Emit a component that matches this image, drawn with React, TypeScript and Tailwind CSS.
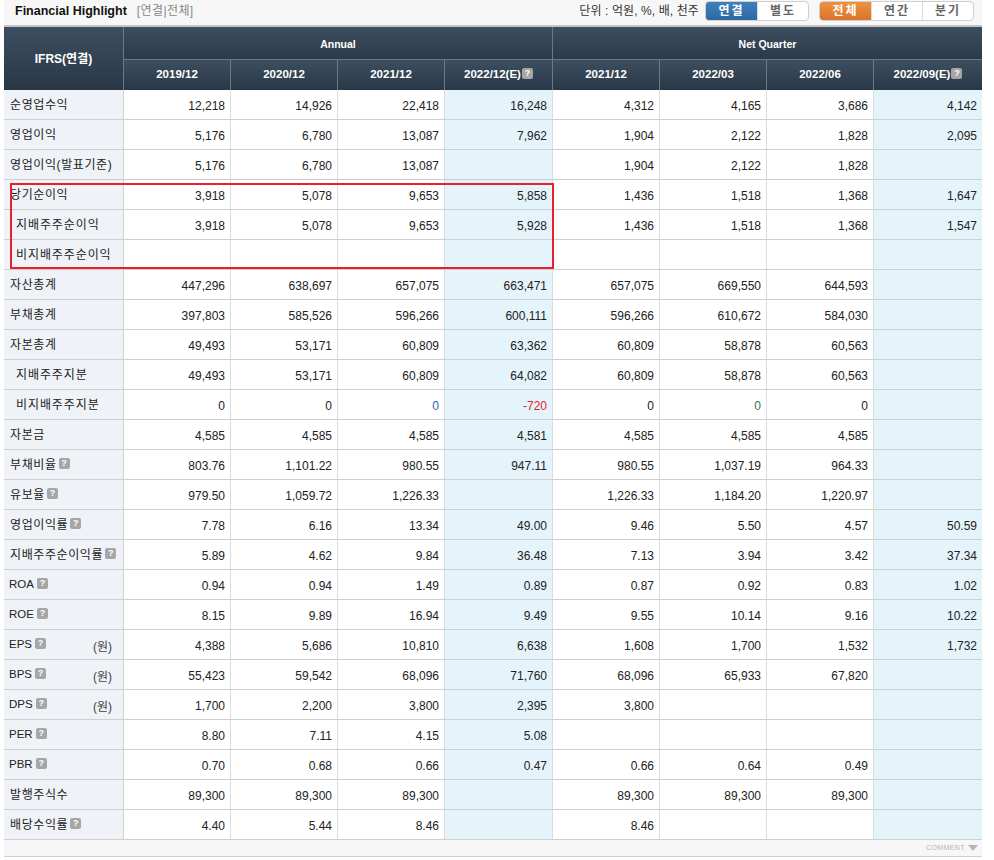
const cols = ['2019/12', '2020/12', '2021/12', '2022/12(E)', '2021/12', '2022/03', '2022/06', '2022/09(E)'];

interface Row {
  label: string;
  indent?: boolean;
  help?: boolean;
  unit?: string;
  values: string[];
}

const rows: Row[] = [
  { label: '순영업수익', values: ['12,218', '14,926', '22,418', '16,248', '4,312', '4,165', '3,686', '4,142'] },
  { label: '영업이익', values: ['5,176', '6,780', '13,087', '7,962', '1,904', '2,122', '1,828', '2,095'] },
  { label: '영업이익(발표기준)', values: ['5,176', '6,780', '13,087', '', '1,904', '2,122', '1,828', ''] },
  { label: '당기순이익', values: ['3,918', '5,078', '9,653', '5,858', '1,436', '1,518', '1,368', '1,647'] },
  { label: '지배주주순이익', indent: true, values: ['3,918', '5,078', '9,653', '5,928', '1,436', '1,518', '1,368', '1,547'] },
  { label: '비지배주주순이익', indent: true, values: ['', '', '', '', '', '', '', ''] },
  { label: '자산총계', values: ['447,296', '638,697', '657,075', '663,471', '657,075', '669,550', '644,593', ''] },
  { label: '부채총계', values: ['397,803', '585,526', '596,266', '600,111', '596,266', '610,672', '584,030', ''] },
  { label: '자본총계', values: ['49,493', '53,171', '60,809', '63,362', '60,809', '58,878', '60,563', ''] },
  { label: '지배주주지분', indent: true, values: ['49,493', '53,171', '60,809', '64,082', '60,809', '58,878', '60,563', ''] },
  { label: '비지배주주지분', indent: true, values: ['0', '0', '0', '-720', '0', '0', '0', ''] },
  { label: '자본금', values: ['4,585', '4,585', '4,585', '4,581', '4,585', '4,585', '4,585', ''] },
  { label: '부채비율', help: true, values: ['803.76', '1,101.22', '980.55', '947.11', '980.55', '1,037.19', '964.33', ''] },
  { label: '유보율', help: true, values: ['979.50', '1,059.72', '1,226.33', '', '1,226.33', '1,184.20', '1,220.97', ''] },
  { label: '영업이익률', help: true, values: ['7.78', '6.16', '13.34', '49.00', '9.46', '5.50', '4.57', '50.59'] },
  { label: '지배주주순이익률', help: true, values: ['5.89', '4.62', '9.84', '36.48', '7.13', '3.94', '3.42', '37.34'] },
  { label: 'ROA', help: true, values: ['0.94', '0.94', '1.49', '0.89', '0.87', '0.92', '0.83', '1.02'] },
  { label: 'ROE', help: true, values: ['8.15', '9.89', '16.94', '9.49', '9.55', '10.14', '9.16', '10.22'] },
  { label: 'EPS', help: true, unit: '(원)', values: ['4,388', '5,686', '10,810', '6,638', '1,608', '1,700', '1,532', '1,732'] },
  { label: 'BPS', help: true, unit: '(원)', values: ['55,423', '59,542', '68,096', '71,760', '68,096', '65,933', '67,820', ''] },
  { label: 'DPS', help: true, unit: '(원)', values: ['1,700', '2,200', '3,800', '2,395', '3,800', '', '', ''] },
  { label: 'PER', help: true, values: ['8.80', '7.11', '4.15', '5.08', '', '', '', ''] },
  { label: 'PBR', help: true, values: ['0.70', '0.68', '0.66', '0.47', '0.66', '0.64', '0.49', ''] },
  { label: '발행주식수', values: ['89,300', '89,300', '89,300', '', '89,300', '89,300', '89,300', ''] },
  { label: '배당수익률', help: true, values: ['4.40', '5.44', '8.46', '', '8.46', '', '', ''] },
];

function Help() {
  return (
    <span className="inline-flex w-[11px] h-[11px] shrink-0 items-center justify-center rounded-[2px] bg-[#a6a6a6] text-white text-[9px] font-bold leading-none">
      ?
    </span>
  );
}

function Toggle({ items, active }: { items: string[]; active: string }) {
  return (
    <div className="flex h-[20px] rounded-[4px] border border-[#cfcfcf] bg-white overflow-hidden">
      {items.map((item, i) => (
        <div
          key={item}
          className={`w-[51px] flex items-center justify-center text-xs font-bold tracking-[2px] ${i > 0 ? 'border-l border-[#dcdcdc]' : ''} ${
            item === '연결' ? 'bg-gradient-to-b from-[#3f80bd] to-[#2e68a3] text-white' : item === active ? 'bg-gradient-to-b from-[#ee9240] to-[#d9742a] text-white' : 'text-[#666]'
          }`}
        >
          {item}
        </div>
      ))}
    </div>
  );
}

export default function App() {
  return (
    <div className="relative w-[994px] h-[860px] bg-white text-xs text-[#222] font-['Liberation_Sans','Noto_Sans_CJK_KR',sans-serif]">
      <div className="ml-[4px] w-[978px]">
        {/* Title bar */}
        <div className="h-[27px] bg-[#f7f7f7] border-b-2 border-[#c4c4c4] flex items-center pl-[11px] pr-[8px] pb-[3px]">
          <span className="font-bold text-[12.5px] text-[#111]">Financial Highlight</span>
          <span className="ml-[10px] text-[#888] tracking-[0.4px]">[연결|전체]</span>
          <span className="ml-auto text-[#333] tracking-[0.1px]">단위 : 억원, %, 배, 천주</span>
          <div className="ml-[6px]">
            <Toggle items={['연결', '별도']} active="연결" />
          </div>
          <div className="ml-[10px]">
            <Toggle items={['전체', '연간', '분기']} active="전체" />
          </div>
        </div>

        {/* Table */}
        <div className="grid grid-cols-[120px_107px_107px_107px_108px_107px_107px_107px_108px] grid-rows-[33px_30px] bg-[#2d3d4e] text-white font-bold">
          <div className="row-span-2 flex items-center justify-center border-r border-[#6c7885] bg-gradient-to-b from-[#3d4e60] to-[#293847]">IFRS(연결)</div>
          <div className="col-span-4 flex items-center justify-center pt-[2px] text-[10.5px] border-r border-[#6c7885] border-b bg-gradient-to-b from-[#3d4e60] to-[#2b3a4a]">Annual</div>
          <div className="col-span-4 flex items-center justify-center pt-[2px] text-[10.5px] border-b border-[#6c7885] bg-gradient-to-b from-[#3d4e60] to-[#2b3a4a]">Net Quarter</div>
          {cols.map((c, i) => (
            <div key={i} className={`flex items-center justify-center gap-px text-[11.5px] bg-gradient-to-b from-[#3d4e60] to-[#293847] ${i < 7 ? 'border-r border-[#6c7885]' : ''}`}>
              {c}
              {c.includes('(E)') && (
                <span className="relative top-[-2px] flex">
                  <Help />
                </span>
              )}
            </div>
          ))}
        </div>

        {rows.map((row) => {
          const latin = /^[A-Z]/.test(row.label);
          return (
            <div key={row.label} className="grid grid-cols-[120px_107px_107px_107px_108px_107px_107px_107px_108px] h-[30px] border-b border-[#cfcfcf]">
              <div className={`flex items-center whitespace-nowrap bg-[#eff2f7] border-r border-[#cfcfcf] pr-[11px] ${row.indent ? 'pl-[12px]' : latin ? 'pl-[5px]' : 'pl-[6px]'}`}>
                <span className={latin ? 'text-[11.5px]' : row.indent ? 'tracking-[0.9px]' : 'tracking-[0.6px]'}>{row.label}</span>
                {row.help && (
                  <span className={`flex relative top-[-1px] ${latin ? 'ml-[3px]' : 'ml-[2px]'}`}>
                    <Help />
                  </span>
                )}
                {row.unit && <span className="ml-auto relative top-[2px] text-[#444]">{row.unit}</span>}
              </div>
              {row.values.map((v, i) => (
                <div
                  key={i}
                  className={`flex items-center justify-end pr-[5px] ${i === 3 || i === 7 ? 'bg-[#e5f4fa]' : ''} ${i < 7 ? 'border-r border-[#dcdcdc]' : ''} ${v === '-720' ? 'text-[#e0252b]' : ''} ${v === '0' && i === 2 ? 'text-[#1f5fa8]' : ''} ${v === '0' && i === 5 ? 'text-[#2b7a4b]' : ''}`}
                >
                  <span className="relative top-[1px]">{v}</span>
                </div>
              ))}
            </div>
          );
        })}

        {/* Footer */}
        <div className="h-[17px] bg-[#f7f7f7] border-b border-[#d0d0d0] flex items-center justify-end pr-[4px] gap-[3px] text-[7px] tracking-[0.4px] text-[#b5b5b5]">
          COMMENT
          <svg width="10" height="6" viewBox="0 0 10 6">
            <path d="M0 0h10L5 6z" fill="#b5b5b5" />
          </svg>
        </div>
      </div>

      {/* Highlight box */}
      <div className="absolute left-[10px] top-[183px] w-[544px] h-[86px] border-2 border-[#e8202e]" />
    </div>
  );
}
